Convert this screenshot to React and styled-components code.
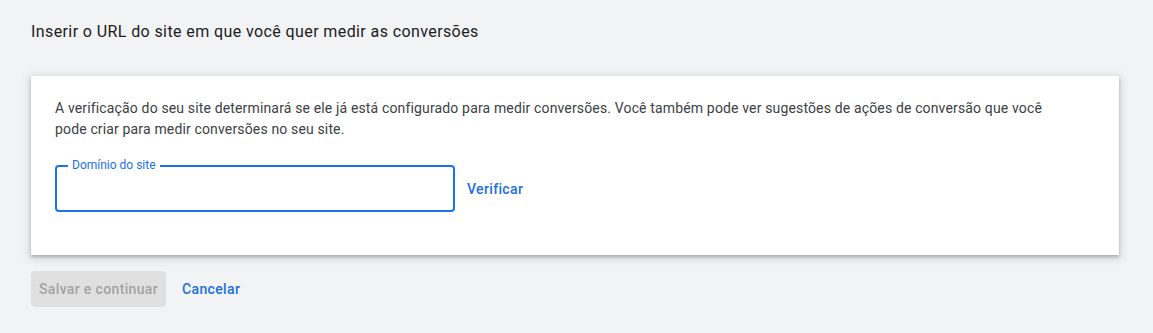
import React from "react";
import styled, { createGlobalStyle } from "styled-components";

const Global = createGlobalStyle`
  html, body { margin: 0; padding: 0; background: #f1f3f4; }
  body { font-family: Roboto, "Noto Sans", Arial, sans-serif; }
  * { box-sizing: border-box; }
`;

const Page = styled.div`
  padding: 20px 34px 20px 31px;
  min-height: 333px;
  background: #f1f3f4;
`;

const Heading = styled.h1`
  margin: 0;
  font-family: Roboto, Arial, sans-serif;
  font-size: 16px;
  line-height: 24px;
  font-weight: 400;
  letter-spacing: 0.4px;
  color: #202124;
`;

const Card = styled.section`
  margin-top: 32px;
  background: #fff;
  padding: 22px 24px 43px 24px;
  box-shadow: 0 2px 3px rgba(60, 64, 67, 0.3), 0 2px 8px 2px rgba(60, 64, 67, 0.15);
`;

const Description = styled.p`
  margin: 0;
  font-size: 14px;
  line-height: 21px;
  letter-spacing: 0.15px;
  color: #3c4043;
  max-width: 1000px;
`;

const FieldRow = styled.div`
  margin-top: 25px;
  display: flex;
  align-items: center;
  gap: 4px;
`;

const InputBox = styled.div`
  position: relative;
  width: 400px;
  height: 47px;
  border: 2px solid #1a73e8;
  border-radius: 4px;
`;

const FloatingLabel = styled.span`
  position: absolute;
  top: -9px;
  left: 11px;
  padding: 0 4px;
  background: #fff;
  font-size: 12px;
  line-height: 14px;
  color: #1a73e8;
`;

const Input = styled.input`
  width: 100%;
  height: 100%;
  border: 0;
  outline: none;
  background: transparent;
  padding: 0 15px;
  font: inherit;
  font-size: 16px;
  color: #202124;
`;

const TextButton = styled.button`
  border: 0;
  background: transparent;
  padding: 0 8px;
  height: 36px;
  font-family: Roboto, Arial, sans-serif;
  font-size: 14px;
  font-weight: 500;
  letter-spacing: 0.35px;
  color: #1b6fdc;
  cursor: pointer;
`;

const Actions = styled.div`
  margin-top: 16px;
  display: flex;
  align-items: center;
  gap: 8px;
`;

const PrimaryButton = styled.button`
  border: 0;
  border-radius: 4px;
  height: 36px;
  padding: 0 8px;
  background: ${(p) => (p.disabled ? "#e0e0e0" : "#1a73e8")};
  color: ${(p) => (p.disabled ? "#a3a3a3" : "#fff")};
  font-family: Roboto, Arial, sans-serif;
  font-size: 14px;
  font-weight: 500;
  letter-spacing: 0.35px;
`;

export default function App() {
  return (
    <>
      <Global />
      <Page>
        <Heading>Inserir o URL do site em que você quer medir as conversões</Heading>
        <Card>
          <Description>
            A verificação do seu site determinará se ele já está configurado para medir conversões. Você também pode ver sugestões de ações de conversão que você pode criar para medir conversões no seu site.
          </Description>
          <FieldRow>
            <InputBox>
              <FloatingLabel>Domínio do site</FloatingLabel>
              <Input aria-label="Domínio do site" />
            </InputBox>
            <TextButton>Verificar</TextButton>
          </FieldRow>
        </Card>
        <Actions>
          <PrimaryButton disabled>Salvar e continuar</PrimaryButton>
          <TextButton>Cancelar</TextButton>
        </Actions>
      </Page>
    </>
  );
}
